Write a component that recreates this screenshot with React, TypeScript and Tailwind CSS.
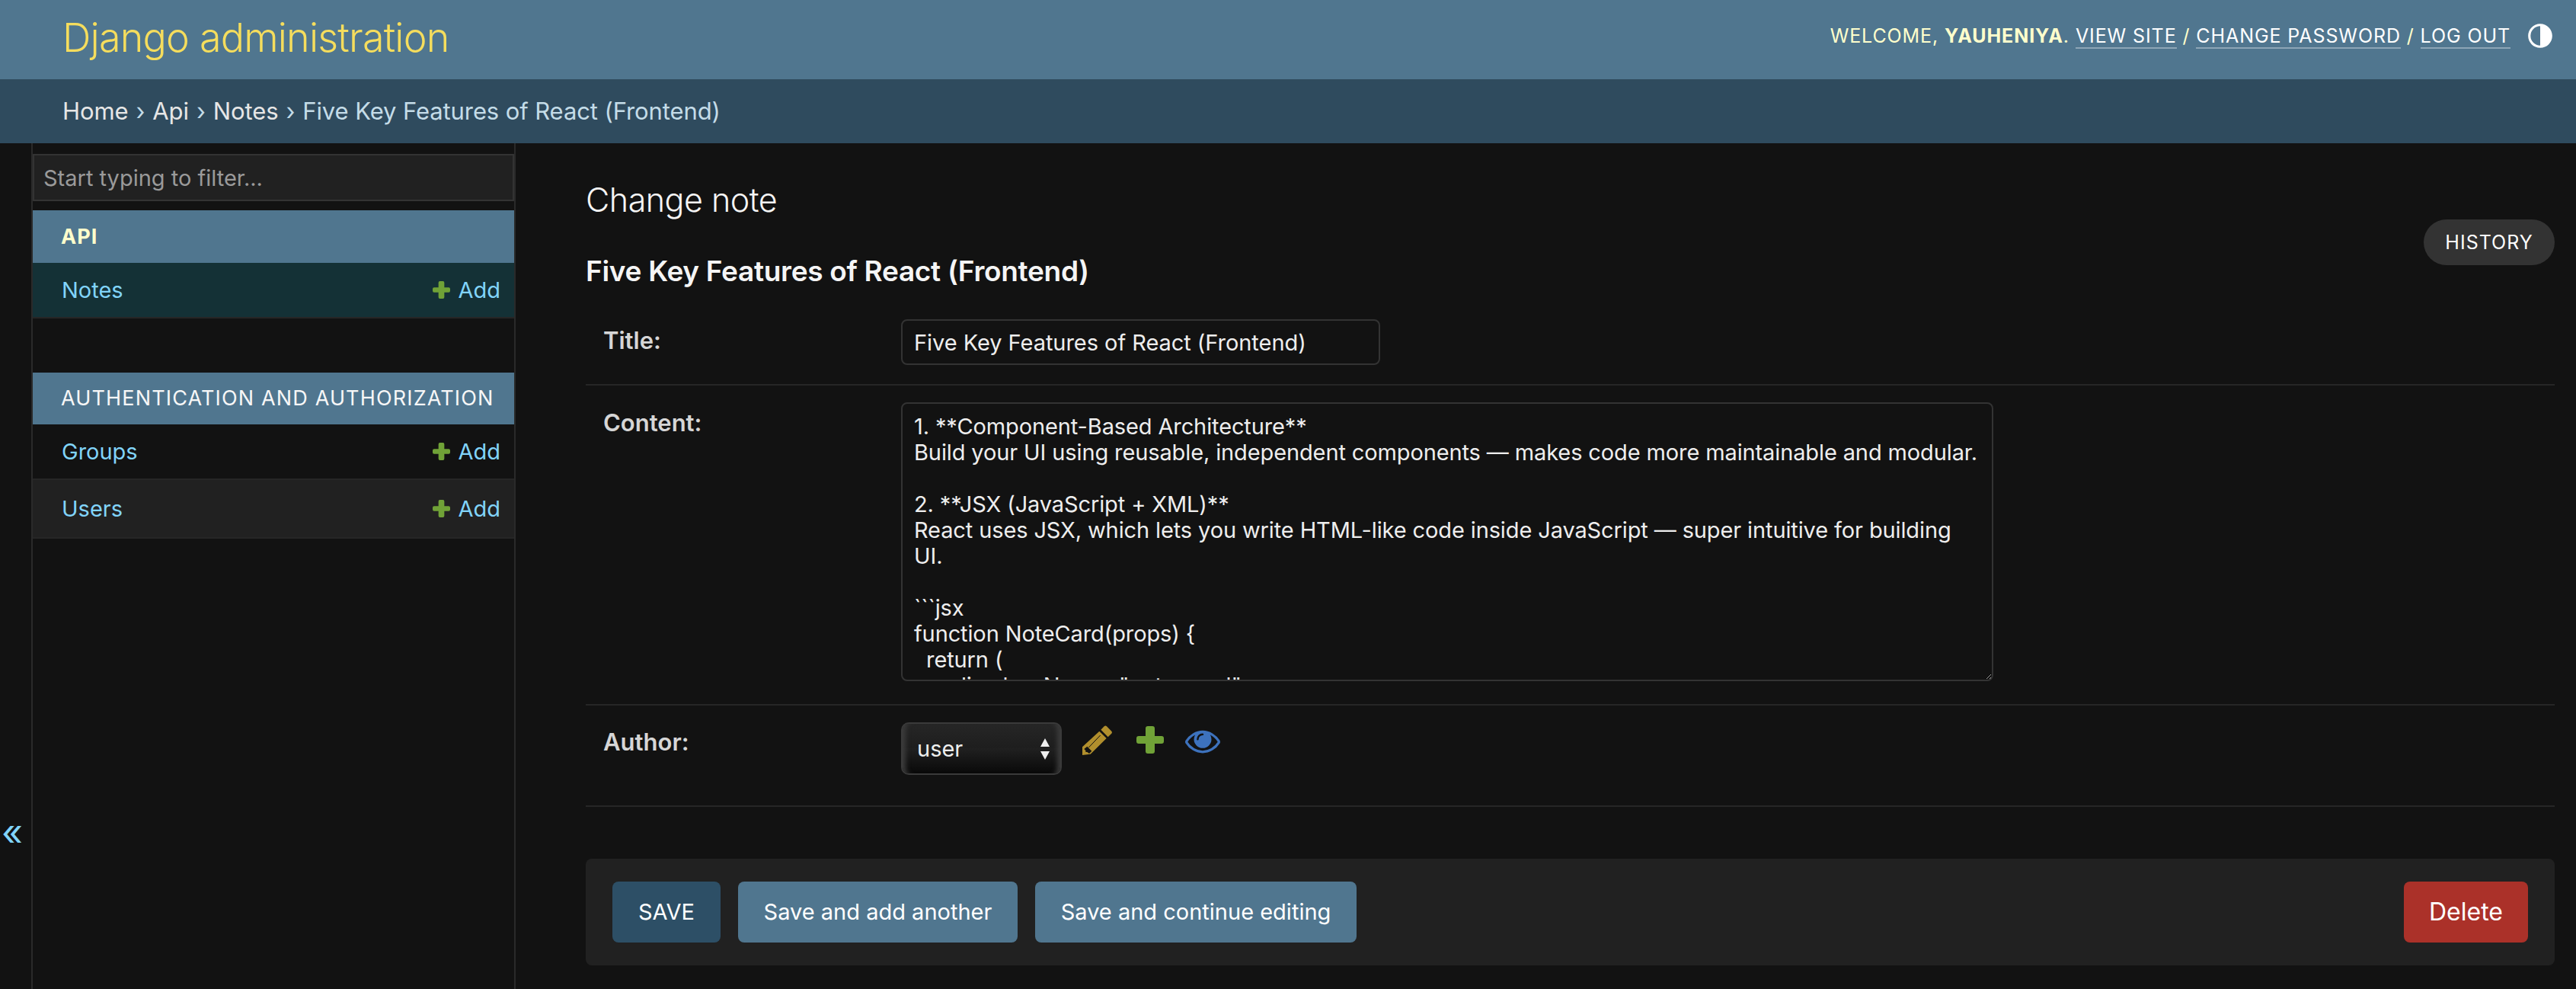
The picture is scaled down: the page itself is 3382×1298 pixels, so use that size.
const content = `1. **Component-Based Architecture**
Build your UI using reusable, independent components — makes code more maintainable and modular.

2. **JSX (JavaScript + XML)**
React uses JSX, which lets you write HTML-like code inside JavaScript — super intuitive for building UI.

\`\`\`jsx
function NoteCard(props) {
  return (
    <div className="note-card">
      <h2>{props.title}</h2>
    </div>
  );
}
\`\`\``;

function PlusIcon({ className }: { className: string }) {
  return (
    <svg viewBox="0 0 36 36" className={className} aria-hidden="true">
      <path
        fill="currentColor"
        d="M15 0h6q3 0 3 3v10h9q3 0 3 3v4q0 3-3 3h-9v10q0 3-3 3h-6q-3 0-3-3V23H3q-3 0-3-3v-4q0-3 3-3h9V3q0-3 3-3z"
      />
    </svg>
  );
}

function AppRow({ name, dark, selected }: { name: string; dark?: boolean; selected?: boolean }) {
  return (
    <div
      className={`flex items-center justify-between border-b-2 border-[#262626] pl-[38px] pr-[18px] text-[#81d4fa] ${
        dark ? "h-[77px] bg-[#212121]" : selected ? "h-[73px] bg-[#143136]" : "h-[73px]"
      }`}
    >
      <a>{name}</a>
      <a className="flex items-center gap-[10px]">
        <PlusIcon className="h-[23px] w-[23px] text-[#70a237]" />
        Add
      </a>
    </div>
  );
}

export default function App() {
  return (
    <div className="flex h-[1298px] flex-col overflow-hidden bg-[#121212] font-['Inter',_'Liberation_Sans',_sans-serif] text-[29px] leading-[34px] text-[#eeeeee]">
      <header className="flex h-[104px] shrink-0 items-start justify-between bg-[#50768f] pl-[82px] pr-[28px]">
        <h1 className="mt-[24px] text-[52px] leading-[52px] font-light tracking-[-0.8px] text-[#f5dd5d]">
          Django administration
        </h1>
        <div className="mt-[28px] flex items-center text-[25px] leading-[30px] tracking-[0.9px] text-[#ffffcc]">
          <span>
            WELCOME, <strong className="font-bold">YAUHENIYA</strong>.{" "}
            <a className="border-b-2 border-[#ffffff59] text-[#ffffff]">VIEW SITE</a> /{" "}
            <a className="border-b-2 border-[#ffffff59] text-[#ffffff]">CHANGE PASSWORD</a> /{" "}
            <a className="border-b-2 border-[#ffffff59] text-[#ffffff]">LOG OUT</a>
          </span>
          <svg viewBox="0 0 24 24" className="ml-[20px] h-[38px] w-[38px] text-white" aria-hidden="true">
            <path
              fill="currentColor"
              d="M12 22C6.477 22 2 17.523 2 12S6.477 2 12 2s10 4.477 10 10-4.477 10-10 10zm0-2V4a8 8 0 1 0 0 16z"
            />
          </svg>
        </div>
      </header>

      <nav className="flex h-[84px] shrink-0 items-center bg-[#2f4b5e] pl-[82px] text-[31px] tracking-[-0.1px] text-[#c4dce8]">
        <a className="text-[#e6e6e6]">Home</a>
        <span className="mx-[10px]">›</span>
        <a className="text-[#e6e6e6]">Api</a>
        <span className="mx-[10px]">›</span>
        <a className="text-[#e6e6e6]">Notes</a>
        <span className="mx-[10px]">›</span>
        <span>Five Key Features of React (Frontend)</span>
      </nav>

      <div className="flex min-h-0 flex-1">
        <button className="flex w-[43px] shrink-0 justify-start border-r-2 border-[#2a2a2a] pt-[884px] pl-[2px] text-[48px] leading-[40px] text-[#81d4fa]">
          «
        </button>

        <aside className="w-[634px] shrink-0 border-r-2 border-[#2a2a2a] pt-[14px]">
          <input
            readOnly
            placeholder="Start typing to filter..."
            className="mb-[12px] block h-[62px] w-full border-2 border-[#333333] bg-[#212121] px-[12px] text-[29px] text-[#eeeeee] outline-none placeholder:text-[#9a9a9a]"
          />
          <section className="mb-[71px]">
            <div className="flex h-[69px] items-center bg-[#50768f] pl-[37px] text-[27px] font-bold tracking-[1px] text-[#ffffcc]">
              API
            </div>
            <AppRow name="Notes" selected />
          </section>
          <section>
            <div className="flex h-[68px] items-center bg-[#50768f] pl-[37px] text-[27px] tracking-[1.15px] text-[#f7f7f7]">
              AUTHENTICATION AND AUTHORIZATION
            </div>
            <AppRow name="Groups" />
            <AppRow name="Users" dark />
          </section>
        </aside>

        <main className="min-w-0 flex-1 pt-[51px] pr-[28px] pl-[92px]">
          <h2 className="text-[43px] leading-[46px] font-light tracking-[-0.5px] text-[#f5f5f5]">Change note</h2>
          <div className="mt-[3px] flex items-start justify-between">
            <h3 className="mt-[46px] text-[37px] leading-[44px] font-semibold tracking-[-0.3px] text-[#f5f5f5]">
              Five Key Features of React (Frontend)
            </h3>
            <a className="flex h-[60px] w-[172px] items-center justify-center rounded-full bg-[#333333] text-[25px] tracking-[1px] text-white">
              HISTORY
            </a>
          </div>

          <div className="mt-[21px] flex h-[107px] border-b-2 border-[#262626] pt-[20px]">
            <label className="w-[414px] shrink-0 pt-[11px] pl-[23px] text-[31px] font-semibold text-[#d6d6d6]">Title:</label>
            <input
              readOnly
              value="Five Key Features of React (Frontend)"
              className="h-[60px] w-[629px] rounded-[8px] border-2 border-[#333333] bg-[#121212] px-[15px] text-[29px] tracking-[-0.05px] text-[#eeeeee] outline-none"
            />
          </div>

          <div className="flex h-[420px] border-b-2 border-[#262626] pt-[22px]">
            <label className="w-[414px] shrink-0 pt-[10px] pl-[23px] text-[31px] font-semibold text-[#d6d6d6]">Content:</label>
            <textarea
              readOnly
              value={content}
              className="h-[366px] w-[1434px] resize overflow-hidden rounded-[8px] border-2 border-[#333333] bg-[#121212] px-[15px] pt-[13px] text-[29px] leading-[34px] tracking-[-0.12px] text-[#eeeeee] scheme-dark outline-none"
            />
          </div>

          <div className="flex h-[133px] border-b-2 border-[#262626] pt-[22px]">
            <label className="w-[414px] shrink-0 pt-[9px] pl-[23px] text-[31px] font-semibold text-[#d6d6d6]">Author:</label>
            <div className="relative h-[69px] w-[211px]">
              <select className="h-full w-full appearance-none rounded-[10px] border-2 border-[#3a3a3a] bg-[linear-gradient(#262626_0%,#1e1e1e_48%,#202020_50%,#090909_100%)] pl-[19px] text-[29px] text-[#eeeeee] shadow-[inset_10px_0_6px_-6px_#3c3c3c,inset_-10px_0_6px_-6px_#3c3c3c] outline-none">
                <option>user</option>
              </select>
              <svg viewBox="0 0 14 28" className="pointer-events-none absolute top-[21px] right-[15px] h-[28px] w-[14px] text-[#eeeeee]" aria-hidden="true">
                <path fill="currentColor" d="M7 0l6 11H1zM7 28l6-11H1z" />
              </svg>
            </div>
            <div className="flex items-start">
              <svg viewBox="813 65 117 117" className="mt-[4px] ml-[27px] h-[39px] w-[39px] text-[#b18f2d]" aria-hidden="true">
                <path
                  fill="currentColor"
                  d="M886 82l13-13q5-5 10 0l19 19q4 5-1 10l-13 13zM880 88l28 28-63 62-32 4v-32z"
                />
                <path fill="none" stroke="#121212" strokeWidth="3" d="M838 152l46-48" />
                <path fill="#121212" d="M820 158l12-10 18 18-10 10-8-6-6 0 0-6z" />
              </svg>
              <PlusIcon className="mt-[5px] ml-[32px] h-[36px] w-[36px] text-[#70a237]" />
              <svg viewBox="0 0 1792 1792" className="mt-[1px] ml-[28px] h-[46px] w-[46px] text-[#3d72bd]" aria-hidden="true">
                <path
                  fill="currentColor"
                  d="M1664 960q-152-236-381-353 61 104 61 225 0 185-131.5 316.5t-316.5 131.5-316.5-131.5-131.5-316.5q0-121 61-225-229 117-381 353 133 205 333.5 326.5t434.5 121.5 434.5-121.5 333.5-326.5zm-720-384q0-20-14-34t-34-14q-125 0-214.5 89.5t-89.5 214.5q0 20 14 34t34 14 34-14 14-34q0-86 61-147t147-61q20 0 34-14t14-34zm848 384q0 34-20 69-140 230-376.5 368.5t-499.5 138.5-499.5-139-376.5-368q-20-35-20-69t20-69q140-229 376.5-368t499.5-139 499.5 139 376.5 368q20 35 20 69z"
                />
              </svg>
            </div>
          </div>

          <div className="mt-[68px] flex h-[140px] items-center gap-[23px] rounded-[8px] bg-[#212121] px-[35px]">
            <button className="h-[80px] w-[142px] rounded-[8px] bg-[#2d4f66] text-[29px] text-white">SAVE</button>
            <button className="h-[80px] w-[367px] rounded-[8px] bg-[#50768f] text-[29px] text-white">Save and add another</button>
            <button className="h-[80px] w-[422px] rounded-[8px] bg-[#50768f] text-[29px] text-white">Save and continue editing</button>
            <a className="ml-auto flex h-[80px] w-[163px] items-center justify-center rounded-[8px] bg-[#ab3129] text-[32px] text-white">
              Delete
            </a>
          </div>
        </main>
      </div>
    </div>
  );
}
